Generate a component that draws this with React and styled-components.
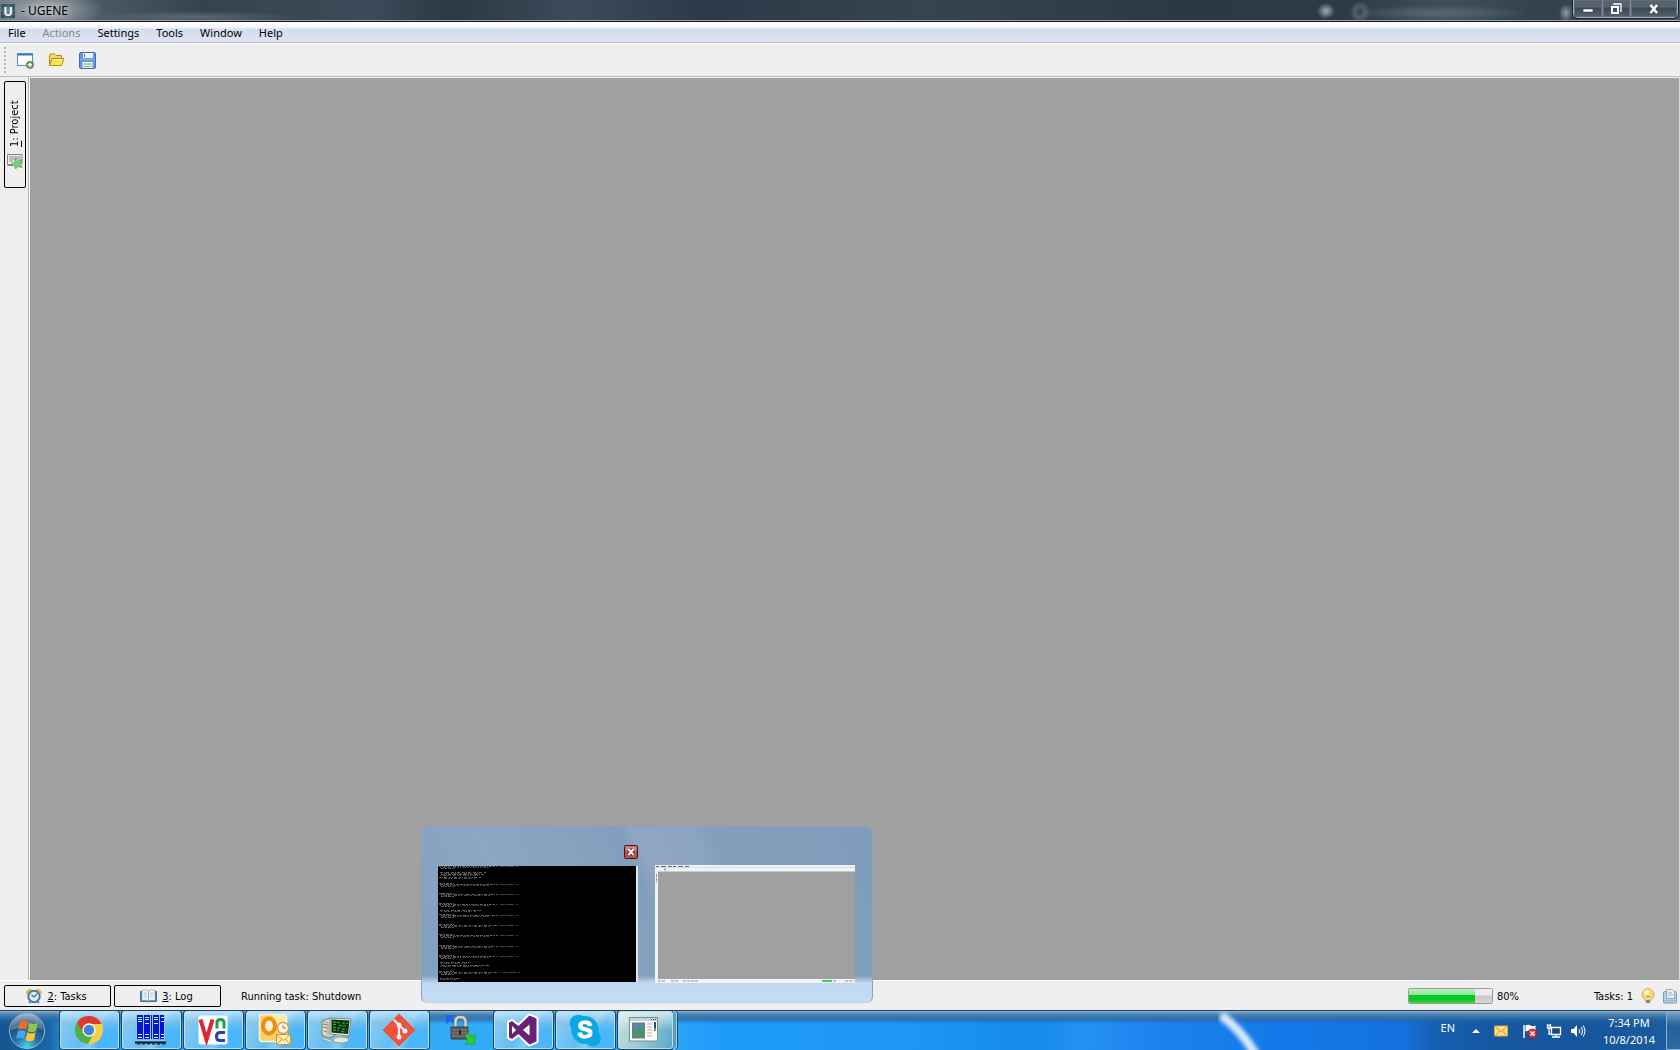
import React from "react";
import styled, { createGlobalStyle, css } from "styled-components";

const GlobalStyle = createGlobalStyle`
  *, *::before, *::after { box-sizing: border-box; }
  html, body, #root { height: 100%; }
  body { margin: 0; overflow: hidden; background: #efefef; }
  button { font: inherit; color: inherit; background: none; border: 0; padding: 0; margin: 0; }
  svg { display: block; flex: none; }
`;

const uiFont = `"Noto Sans", "Open Sans", sans-serif`;
const tahoma = `"DejaVu Sans Condensed", "Noto Sans", sans-serif`;

const Desktop = styled.div`
  position: relative;
  display: flex;
  flex-direction: column;
  height: 100vh;
  font-family: ${uiFont};
  font-size: 11px;
  color: #000;
`;

/* ---------- title bar ---------- */
const TitleBar = styled.header`
  flex: none;
  display: flex;
  align-items: flex-start;
  height: 22px;
  overflow: hidden;
  border-bottom: 1px solid #10131c;
  box-shadow: inset 0 -1px 0 #9ea5b0;
  background:
    radial-gradient(ellipse 60px 22px at 44px 10px, #a9b0b3 0, #8f989ecc 45%, transparent 100%),
    radial-gradient(ellipse 9px 8px at 1326px 11px, #a5b0b8 0, transparent 100%),
    radial-gradient(ellipse 7px 9px at 1566px 13px, #8f9ba5 0, transparent 100%),
    radial-gradient(ellipse 90px 8px at 1440px 13px, #5b6874 0, transparent 100%),
    radial-gradient(ellipse 110px 6px at 190px 17px, #5c6976 0, transparent 100%),
    linear-gradient(90deg, #68747f 0, #4a5866 6%, #36434f 12%, #3c4a59 22%, #2b3845 27%, #3c4a59 34%, #2d3948 42%, #364350 55%, #2c3846 70%, #2d3947 80%, #3e4f5b 86%, #33404e 92%, #4b5966 100%);
`;
const AppTitle = styled.h1`
  flex: 1;
  display: flex;
  align-items: center;
  gap: 6px;
  height: 21px;
  margin: 0;
  padding-left: 1px;
  font-size: 12px;
  line-height: 20px;
  font-weight: 400;
  text-shadow: 0 0 6px #d5dadc, 0 0 8px #c2c8cb;
`;
const GhostRing = styled.svg`
  margin-right: 203px;
  filter: blur(2px);
`;
const WindowButtons = styled.div`
  display: flex;
  height: 18px;
  margin-right: 2px;
  border: 1px solid #a2abb3;
  border-top: 0;
  border-radius: 0 0 5px 5px;
  box-shadow: 0 0 0 1px #1d2631;
  background: linear-gradient(#56636f 0 40%, #3d4954 50%, #56616c);
`;
const WindowButton = styled.button`
  display: grid;
  place-items: center;
  width: ${(p) => (p.$wide ? 47 : 28)}px;
  border-left: ${(p) => (p.$first ? "0" : "1px solid #7f8a94")};
  box-shadow: inset 0 0 0 1px #606c77;
`;

/* ---------- menus and tool bar ---------- */
const MenuBar = styled.nav`
  flex: none;
  display: flex;
  gap: 1px;
  height: 21px;
  border-bottom: 1px solid #b6b9cf;
  background: linear-gradient(#ffffff 0, #f4f7fb 25%, #d5dcec 38%, #dfe4f5 100%);
`;
const MenuItem = styled.button`
  padding: 2px 8px 0;
  line-height: 18px;
  color: ${(p) => (p.disabled ? "#868890" : "#000")};
`;
const ToolBar = styled.div`
  flex: none;
  display: flex;
  align-items: center;
  gap: 12px;
  height: 34px;
  padding-left: 4px;
  border-top: 1px solid #fff;
  border-bottom: 1px solid #b9bdba;
  background: #efefef;
`;
const Grip = styled.span`
  width: 2px;
  height: 26px;
  background: repeating-linear-gradient(#b5b5b5 0 2px, transparent 2px 4px);
`;
const ToolButtons = styled.div`
  display: flex;
  gap: 14px;
  margin-left: -1px;
`;

/* ---------- workspace ---------- */
const Workspace = styled.main`
  flex: 1;
  display: flex;
  min-height: 0;
  background: #a0a0a0;
`;
const Dock = styled.aside`
  width: 30px;
  padding: 4px 0 0 4px;
  background: #efefef;
  border-right: 1px solid #fafafa;
  box-shadow: inset -1px 0 0 #b4b4b4;
`;
const Canvas = styled.section`
  flex: 1;
  background: #a0a0a0;
  border-top: 1px solid #f2f2f2;
  border-right: 1px solid #d8d8d8;
`;
const outlined = css`
  display: flex;
  align-items: center;
  border: 1px solid #000;
  border-radius: 2px;
  background: #efefef;
  font-family: ${tahoma};
  font-size: 11px;
`;
const DockTab = styled.button`
  ${outlined}
  writing-mode: vertical-rl;
  transform: rotate(180deg);
  justify-content: center;
  gap: 6px;
  width: 22px;
  height: 107px;
  line-height: 18px;
`;
const UprightIcon = styled.span`
  transform: rotate(180deg);
`;

/* ---------- status bar ---------- */
const StatusBar = styled.footer`
  flex: none;
  display: flex;
  align-items: center;
  gap: 3px;
  height: 30px;
  padding: 1px 2px 0 4px;
  border-top: 1px solid #fff;
  background: #efefef;
  font-family: ${tahoma};
  font-size: 11px;
`;
const StatusTab = styled.button`
  ${outlined}
  justify-content: center;
  gap: 5px;
  width: 107px;
  height: 22px;
  padding-right: 2px;
`;
const Running = styled.span`
  flex: 1;
  padding-left: 17px;
`;
const Progress = styled.progress`
  appearance: none;
  width: 85px;
  height: 16px;
  border: 1px solid #9a9a9a;
  border-radius: 2px;
  overflow: hidden;
  &::-webkit-progress-bar {
    background: linear-gradient(#ececec 0 40%, #cacaca 50%, #d6d6d6);
  }
  &::-webkit-progress-value {
    background: linear-gradient(#b9f3bd 0, #8fe79a 40%, #08cb1f 46%, #0ac522 75%, #3bdc4a 100%);
  }
`;
const ProgressLabel = styled.label`
  display: flex;
  align-items: center;
  gap: 4px;
  margin-right: 72px;
`;
const TaskCount = styled.span`
  margin-right: 5px;
`;
const StatusIcons = styled.div`
  display: flex;
  gap: 8px;
`;

/* ---------- task bar ---------- */
const TaskBar = styled.footer`
  flex: none;
  display: flex;
  height: 40px;
  overflow: hidden;
  border-top: 1px solid #1e3c5c;
  background:
    linear-gradient(#a9c4da 0, #6f9dc1 1px, #3d78ab 5px, #2766a4aa 9px, transparent 13px),
    linear-gradient(90deg, #14548f 0, #1a67a6 50px, #2c9fe8 70px, #35aef5 320px, #2fa8f6 660px, #1f9bfa 720px, #1c97f8 900px, #1689ec 1040px, #2490f6 1080px, #1a80ea 1180px, #1379e8 1280px, #1471df 1405px, #155fb0 1435px, #1556a0 1500px, #16569b 1600px, #1c5d9f 100%);
`;
const StartButton = styled.button`
  width: 60px;
  padding-left: 8px;
`;
const AppButtons = styled.div`
  display: flex;
  gap: 3px;
`;
const AppButton = styled.button`
  display: grid;
  place-items: center;
  width: 59px;
  height: 38px;
  padding-right: 2px;
  border-radius: 3px;
  ${(p) =>
    !p.$plain &&
    css`
      border: 1px solid #b9dff5;
      box-shadow: 0 0 0 1px #17476f;
      background:
        linear-gradient(#e6f4fb99 0, #8cc3e288 30%, transparent 50%),
        linear-gradient(115deg, #8ccef2 0, #62bdf3 45%, #84cdf8 60%, #4cb8fa 70%, #45b5fb 100%);
    `}
  ${(p) =>
    p.$active &&
    css`
      width: 55px;
      padding-right: 4px;
      background:
        linear-gradient(#ecf7f6bb 0, #b5dbe000 50%),
        linear-gradient(110deg, #c6e3de 0, #8dc3cd 60%, #57a8ce 100%);
    `}
`;
const StackEdge = styled.span`
  width: 4px;
  height: 38px;
  margin-left: -3px;
  border: 1px solid #a9d3e5;
  border-left: 0;
  border-radius: 0 3px 3px 0;
  background: #5b9bbd;
  box-shadow: 1px 0 0 #17476f;
`;
const Sweep = styled.div`
  flex: 1;
  display: flex;
  justify-content: flex-end;
  padding-right: 173px;
`;
const SweepArc = styled.path`
  fill: none;
  stroke: #d8eafb;
  stroke-width: 9px;
  filter: blur(2px);
`;
const Tray = styled.div`
  display: flex;
  align-items: center;
  color: #fff;
`;
const Language = styled.button`
  margin-right: 17px;
  padding-bottom: 6px;
`;
const TrayIcons = styled.div`
  display: flex;
  align-items: center;
  gap: 8px;
`;
const TrayButton = styled.button`
  margin-right: ${(p) => p.$space || 0}px;
`;
const Clock = styled.time`
  width: 80px;
  padding-left: 6px;
  text-align: center;
  line-height: 17px;
`;
const ShowDesktop = styled.button`
  width: 14px;
  border: 1px solid #8fb0cf;
  border-right: 0;
  background: linear-gradient(#86a9c8aa, #2d639b88 40%, #3f76ab88);
`;

/* ---------- window previews ---------- */
const Preview = styled.div`
  position: absolute;
  left: 421px;
  bottom: 47px;
  display: flex;
  align-items: flex-start;
  gap: 17px;
  padding: 38px 17px 19px 16px;
  border-radius: 6px;
  border: 1px solid #86a5c4;
  border-bottom-color: #b8d3ec;
  background:
    linear-gradient(transparent 85%, #bfd7f0 89%, #c5dcf5 100%),
    linear-gradient(65deg, #809fbf 0, #8da6c2 25%, #87a3bf 38%, #819fbd 52%, #90a7c2 55%, #8ba4c0 66%, #829fbc 69%, #7f9dba 100%);
`;
const ThumbButton = styled.button`
  display: block;
`;
const ClosePreview = styled.button`
  position: absolute;
  left: 202px;
  top: 18px;
`;

/* ---------- drawings ---------- */
const Svg = ({ w, h, children }) => (
  <svg width={w} height={h} viewBox={`0 0 ${w} ${h}`} aria-hidden="true">{children}</svg>
);

const UgeneIcon = () => (
  <Svg w={14} h={14}>
    <rect width="14" height="14" rx="1" fill="#123e47" />
    <rect width="14" height="7" rx="1" fill="#1f4a55" />
    <text x="7" y="11.5" textAnchor="middle" fontFamily="Liberation Sans, sans-serif" fontWeight="700" fontSize="12" fill="#fff">U</text>
  </Svg>
);

const NewProjectIcon = () => (
  <Svg w={17} h={17}>
    <rect x=".5" y="1.5" width="15" height="12" fill="#fdfeff" stroke="#4f8bd0" />
    <path d="M1 2h14v2H1z" fill="#8fbdec" />
    <path d="M0 2.5h16" stroke="#3a78c4" />
    <circle cx="13" cy="12.8" r="3.6" fill="#6f9f5a" stroke="#4b7f3d" strokeWidth=".8" />
    <path d="M13 10.8v4M11 12.8h4" stroke="#fff" strokeWidth="1.5" />
  </Svg>
);
const OpenIcon = () => (
  <Svg w={17} h={17}>
    <path d="M1.5 13.5v-10l1-1.500h4l1.500 1.500h5.500v3" fill="#f2d469" stroke="#b58a12" />
    <path d="M1.500 13.500 4 6.500h12l-2.500 7z" fill="#fbe254" stroke="#b98d10" strokeLinejoin="round" />
    <path d="M4.700 7.500h9.800" stroke="#fff7b8" />
  </Svg>
);
const SaveIcon = () => (
  <Svg w={17} h={17}>
    <rect x=".5" y=".5" width="16" height="16" rx="1.500" fill="#6795de" stroke="#3d6cc0" />
    <path d="M4 1h10v5H4z" fill="#eef3fc" />
    <path d="M5.500 2v3" stroke="#4673c4" />
    <path d="M3.500 10h10v6h-10z" fill="#f7fbf5" />
    <path d="M4.500 12h8M4.500 14.500h8" stroke="#8cc58b" strokeWidth="1.300" />
    <path d="M1.500 7.500h14" stroke="#8fb4ee" />
  </Svg>
);
const ProjectIcon = () => (
  <Svg w={16} h={16}>
    <path d="M.5 1.500h14.500v9H10M6 12.500H.5z" fill="#e7ebe7" stroke="#7e8a80" />
    <path d="M.5 1.500v10H6" fill="none" stroke="#7e8a80" />
    <path d="M3 3v6M5 3v7M7 3v4M9 3v4M11 3v4M13 3v5" stroke="#88918a" />
    <path d="M9 5v3.500L15 7l-1.500 4 1.500 3.500-4-1-2.500 2.500-1-3L4 11.500l3.500-2z" fill="#76cf7e" stroke="#4eaa5c" strokeWidth=".8" />
  </Svg>
);
const AlarmIcon = () => (
  <Svg w={16} h={16}>
    <path d="M1.500 4.500 4 2M14.500 4.500 12 2" stroke="#e8b93c" strokeWidth="3" strokeLinecap="round" />
    <path d="m3 15 2-2M13 15l-2-2" stroke="#456a8a" strokeWidth="1.500" />
    <circle cx="8" cy="8.500" r="5.700" fill="#dcebf7" stroke="#4b7aa6" strokeWidth="2" />
    <path d="m5.500 7 2.500 2 3-3" stroke="#41688e" fill="none" strokeWidth="1.200" />
  </Svg>
);
const BookIcon = () => (
  <Svg w={17} h={16}>
    <path d="M.5 3.500h16v10h-7l-1 1-1-1h-7z" fill="#4f81a6" stroke="#41708f" />
    <path d="M2 2.500q4-1.500 6.500 0.500v10q-3-1.500-6.500-.5zM15 2.500q-4-1.500-6.500.500v10q3-1.500 6.500-.5z" fill="#f8fbfd" stroke="#7c9db3" strokeWidth=".7" />
    <path d="M3.500 5h3.500M3.500 7h3.500M3.500 9h3.500M10 5h3.500M10 7h3.500M10 9h3.500" stroke="#9fb8c9" strokeWidth=".8" />
  </Svg>
);
const BulbIcon = () => (
  <Svg w={14} h={16}>
    <path d="M7 .7a6 6 0 0 0-3.200 11l.8 1h4.800l.8-1A6 6 0 0 0 7 .7z" fill="#fbd875" stroke="#d9a94a" strokeWidth=".9" />
    <circle cx="5.500" cy="4.500" r="2.500" fill="#fff6d5" />
    <path d="m5 8 1 1 1-1 1 1 1-1" stroke="#c88c2c" fill="none" />
    <path d="M5 12h4v3H5z" fill="#7c8797" />
  </Svg>
);
const ClipboardIcon = () => (
  <Svg w={15} h={16}>
    <rect x=".5" y="3.500" width="13" height="11.500" rx="1" fill="#b9cfe2" stroke="#7e99b3" />
    <path d="M3.500 10.500v-9h6l2 2v7z" fill="#e7eff6" stroke="#91a8bd" />
    <path d="M5 5h4M5 7h5M2 12.500h10" stroke="#9db4c7" />
  </Svg>
);

const StartOrb = () => (
  <Svg w={38} h={38}>
    <defs>
      <radialGradient id="orb" cx=".5" cy=".95" r=".95">
        <stop offset="0" stopColor="#4ed3f1" />
        <stop offset=".35" stopColor="#2277a5" />
        <stop offset=".75" stopColor="#1c4a76" />
        <stop offset="1" stopColor="#8fa9bf" />
      </radialGradient>
    </defs>
    <circle cx="19" cy="19" r="17.500" fill="url(#orb)" stroke="#9cb9ce" />
    <path d="M3 18a16 16 0 0 1 32 0q-14-7-32 0z" fill="#fff" opacity=".25" />
    <path d="M12 10q4.500-2.500 8 0L18.200 18q-4.500-2.500-8.200 0z" fill="#ee6b2e" />
    <path d="M21.300 10.800q4 2.500 8.500 0L28 19q-4.500 2.500-8.500 0z" fill="#91c740" />
    <path d="M9.700 19.500q4.500-2.500 8.200 0L16.200 27q-4.500-2.500-8 0z" fill="#4ba6e6" />
    <path d="M19.200 20.300q4 2.500 8.500 0L26 28q-4.500 2.500-8.500 0z" fill="#fbc739" />
  </Svg>
);
const ChromeIcon = () => (
  <Svg w={30} h={30}>
    <circle cx="15" cy="15" r="14" fill="#f7d046" />
    <path d="M15 15 3 7.500A14 14 0 0 0 14 29l5.500-10z" fill="#4db04c" />
    <path d="M3 7.500 9.500 18 15 9h12.500A14 14 0 0 0 3 7.500z" fill="#de3a30" />
    <circle cx="15" cy="15" r="6.700" fill="#f2f4f6" />
    <circle cx="15" cy="15" r="5.200" fill="#4286d6" />
  </Svg>
);
const ServerIcon = () => (
  <Svg w={32} h={32}>
    <path d="M1 1h29v24H1z" fill="#0812cf" />
    <path d="M1.500 25V1M8.500 25V1M15.500 25V1M17.500 25V1M24.500 25V1M29.500 25V1" stroke="#79d2f5" />
    <path d="M3 3.500h4M3 5.500h4M3 7.500h4M10 3.500h4M10 5.500h4M19 3.500h4M19 5.500h4M26 3.500h3M26 7.500h3M3 20.500h4M3 23.500h4M10 20.500h4M10 23.500h4M19 20.500h4M19 23.500h4M26 20.500h3M26 23.500h3M10 9.500h4M19 9.500h4" stroke="#c7f1fa" />
    <path d="M1 26.500h29" stroke="#79d2f5" />
    <path d="M0 28.500h31" stroke="#06151b" strokeWidth="2" />
    <path d="M2 30h28" stroke="#06151b" strokeDasharray="3 2" />
  </Svg>
);
const VncIcon = () => (
  <Svg w={30} h={30}>
    <rect x=".5" y=".5" width="29" height="29" rx="2" fill="#fdfdfd" />
    <path d="m2.500 4.500 6 20 6-20" stroke="#df2631" strokeWidth="4" fill="none" />
    <path d="M19 13.500V8q0-3.500 3.500-3.500T26 8v5.500" stroke="#1aa045" strokeWidth="3" fill="none" />
    <path d="M27 17.500h-5q-3.500 0-3.500 4t3.500 4h5" stroke="#2a3fbe" strokeWidth="3" fill="none" />
  </Svg>
);
const OutlookIcon = () => (
  <Svg w={34} h={34}>
    <rect x="1.500" y="1.500" width="27" height="27" rx="3" fill="#fbd06c" stroke="#fff3ce" strokeWidth="1.500" />
    <path d="M15 2h13v13H15z" fill="#fde8ae" />
    <ellipse cx="11" cy="13" rx="6" ry="7.500" fill="#fff3d2" stroke="#e98d13" strokeWidth="4" />
    <circle cx="25" cy="15" r="5.500" fill="#fffaf0" stroke="#dc9b42" strokeWidth="1.400" />
    <path d="M25 12v3h3" fill="none" stroke="#a96b26" />
    <path d="M18.500 21.500h14v10h-14z" fill="#fff2bf" stroke="#d79226" />
    <path d="m19 22 6.500 5.500L32 22M19 31l5-5M32 31l-5-5" fill="none" stroke="#d79226" />
  </Svg>
);
const PuttyIcon = () => (
  <Svg w={32} h={32}>
    <path d="m1 7 8-3 4 1v17l-6 2-6-3z" fill="#d9d6cb" stroke="#6d6b63" strokeWidth=".8" />
    <path d="M2 10l5 1M2 13l5 1M3 17l3 1" stroke="#807d72" />
    <path d="m1 7 6 2v15" fill="none" stroke="#a5a297" />
    <path d="m9 4 21 1-2 17-19-2z" fill="#e9e6dc" stroke="#77766c" strokeWidth=".8" />
    <path d="m10.500 5.500 18 1-1.500 13.500-16.500-1.500z" fill="#06300e" />
    <path d="M12 8l7 .5M21 9l6 .3M12 10.500l4 .3M18 11.500l8 .5M12 13.500l7 .5M21 15l5 .4M12 16l6 .6M20 17.500l5 .4" stroke="#2da338" strokeWidth="1.300" strokeDasharray="3 1" />
    <path d="M16 21l7 1v3h-7z" fill="#bbb8ac" />
    <ellipse cx="20" cy="26" rx="8" ry="3" fill="#e9e6dc" stroke="#87867c" strokeWidth=".7" />
    <path d="m2 23 10 4-2 2-9-4z" fill="#d9d5c8" stroke="#8c897e" strokeWidth=".6" />
  </Svg>
);
const GitIcon = () => (
  <Svg w={34} h={34}>
    <path d="M17 1 33 17 17 33 1 17z" fill="#f0523a" stroke="#f0523a" strokeLinejoin="round" />
    <path d="M11.500 6.500 17 12v12M17 12l6 6" stroke="#dff0fa" strokeWidth="2.200" fill="none" />
    <circle cx="17" cy="12" r="2.500" fill="#dff0fa" />
    <circle cx="17" cy="24" r="2.500" fill="#dff0fa" />
    <circle cx="23" cy="18" r="2.500" fill="#dff0fa" />
  </Svg>
);
const LockIcon = () => (
  <Svg w={32} h={32}>
    <path d="M1 1h9L7 4l3 4-2 2-3-3-4 3z" fill="#1368e4" />
    <path d="M10.500 15V8q0-5 5-5t5 5v7" fill="none" stroke="#6d7173" strokeWidth="4" />
    <path d="M10.500 15V8q0-5 5-5t5 5v7" fill="none" stroke="#d0d3d4" strokeWidth="2.500" />
    <rect x="6" y="13" width="17" height="12" rx="1" fill="#5c5a58" stroke="#393a3b" />
    <path d="M6 16h17M6 19h17M6 22h17" stroke="#827f7b" />
    <path d="M14 16h2v5h-2z" fill="#252525" />
    <path d="m20 21 3-2 4 4 3-3v10H20l3-3z" fill="#29cf2d" stroke="#159c20" strokeWidth=".6" />
  </Svg>
);
const VisualStudioIcon = () => (
  <Svg w={34} h={34}>
    <path fillRule="evenodd" d="m23.500 2.500 7 3v23l-7 3-11-10.500-6.500 5-3-1.500v-15l3-1.500 6.500 5zm0 9L17 17l6.500 5.500zM6 13v8l4-4z" fill="#68217a" stroke="#fff" strokeWidth="4" strokeLinejoin="round" />
    <path fillRule="evenodd" d="m23.500 2.500 7 3v23l-7 3-11-10.500-6.500 5-3-1.500v-15l3-1.500 6.500 5zm0 9L17 17l6.500 5.500zM6 13v8l4-4z" fill="#68217a" />
  </Svg>
);
const SkypeIcon = () => (
  <Svg w={32} h={32}>
    <path d="M9 1a8 8 0 0 1 5 1 14 14 0 0 1 15.500 16.500A8 8 0 0 1 18 30 14 14 0 0 1 2.500 14 8 8 0 0 1 9 1z" fill="#0ba8e3" />
    <text x="16" y="24" textAnchor="middle" fontFamily="Liberation Sans, sans-serif" fontWeight="700" fontSize="23" fill="#fff" stroke="#fff">S</text>
  </Svg>
);
const PaneIcon = () => (
  <Svg w={30} h={26}>
    <rect x=".5" y=".5" width="28" height="23.500" fill="#fbfcfd" stroke="#7d8b95" />
    <path d="M1 2.500h27" stroke="#c2d4e2" strokeWidth="3" />
    <path d="M22 2.500h1M24 2.500h1M26 2.500h1" stroke="#334a5c" />
    <rect x="3.500" y="6" width="12" height="15" fill="#5c88a8" stroke="#687a86" />
    <path d="M4 16q5-5 11-6v10.500H4z" fill="#4e9364" />
    <path d="M18 7h5M18 10h5M18 13h5M18 16h5M18 19h5" stroke="#d29fa0" />
    <path d="M26 5v9" stroke="#285080" strokeWidth="2" />
    <path d="M26 11v3" stroke="#63a453" strokeWidth="2" />
  </Svg>
);

const ChevronIcon = () => (
  <Svg w={8} h={5}>
    <path d="m0 5 4-4 4 4z" fill="#fff" />
  </Svg>
);
const MailIcon = () => (
  <Svg w={14} h={12}>
    <path d="M.5 1h13v10H.5z" fill="#fae08a" stroke="#e7a93a" />
    <path d="m1 1.500 6 5 6-5M1 11l4.500-5M13 11 8.500 6" stroke="#d8932a" fill="none" />
  </Svg>
);
const FlagIcon = () => (
  <Svg w={16} h={16}>
    <path d="M2 2v13" stroke="#fff" strokeWidth="1.500" />
    <path d="M3.500 2.500q3-1.500 5 0t5 0v6q-3 1.500-5 0t-5 0z" fill="#fff" />
    <circle cx="10.500" cy="10.500" r="4.500" fill="#db3535" stroke="#8d1a20" strokeWidth=".7" />
    <path d="m8.500 8.500 4 4M12.500 8.500l-4 4" stroke="#fff" strokeWidth="1.500" />
  </Svg>
);
const NetworkIcon = () => (
  <Svg w={16} h={16}>
    <path d="M5.500 4.500h9v7h-9z" fill="#174a80" stroke="#fff" strokeWidth="1.300" />
    <path d="M6 14h8M10 12v2M1.500 1v4h3V1M3 5v6h2M1 2.500h4" stroke="#fff" strokeWidth="1.300" fill="none" />
  </Svg>
);
const VolumeIcon = () => (
  <Svg w={16} h={16}>
    <path d="M1 6h2.500L7 2v12l-3.500-4H1z" fill="#fff" />
    <path d="M9 6q1.500 2 0 4M11 4q3 4 0 8M13 2.500q4 5.500 0 11" stroke="#e7f1fa" fill="none" strokeWidth="1.100" />
  </Svg>
);

const consoleRows = [
  [1, 80, 1], [7, 64, 0], [9, 62, 0], [12, 58, 0], [19, 80, 1], [29, 80, 1], [39, 80, 1], [45, 58, 0],
  [50, 80, 1], [60, 80, 1], [70, 80, 1], [81, 80, 1], [91, 80, 1], [97, 46, 0], [100, 68, 0], [107, 82, 1], [113, 30, 0],
];
const ConsoleThumb = () => (
  <Svg w={200} h={117}>
    <path d="M0 1h198v116H0z" fill="#000" />
    <path d="M199 1v116" stroke="#dfe6ee" strokeWidth="2" />
    {consoleRows.map(([y, len, bold], i) => (
      <g key={y} stroke="#b9b9b9" fill="none">
        <path d={`M${(i % 3) + 1} ${y + 0.5}H${len * 0.75}`} strokeDasharray={`${2 + (i % 3)} 1 1 1 3 ${1 + (i % 2)}`} opacity=".5" />
        <path d={`M${(i % 2) + 2} ${y + 1.5}H${len * 0.65}`} strokeDasharray="1 2 3 1 2 1" opacity=".4" />
        {bold === 1 && (
          <>
            <path d={`M1 ${y - 0.5}h15M3 ${y + 2.5}h13`} strokeDasharray="3 1 2 1" opacity=".5" />
            <path d={`M${len - 18} ${y + 0.5}h18`} strokeDasharray="5 1 8 2" opacity=".35" />
          </>
        )}
      </g>
    ))}
  </Svg>
);
const UgeneThumb = () => (
  <Svg w={200} h={118}>
    <path d="M0 0h200v118H0z" fill="#f3f4f5" />
    <path d="M0 2.500h200" stroke="#d9e5f4" strokeWidth="2" />
    <path d="M1 1.500h34" stroke="#57647a" strokeDasharray="3 2 5 2 4 1" />
    <path d="M9 4.500h2" stroke="#9ba6b3" strokeWidth="2" />
    <path d="M3 6.500h197V114H3z" fill="#a0a0a0" />
    <path d="M1.500 9v9" stroke="#8d9692" strokeDasharray="3 1" />
    <path d="M3 116h8M16 116h8M28 116h15M178 116h4M190 116h9" stroke="#8c8f8f" strokeDasharray="3 1" />
    <path d="M167 116h10" stroke="#35cf57" strokeWidth="2" />
  </Svg>
);

const menus = ["File", "Actions", "Settings", "Tools", "Window", "Help"];
const tools = [["New project", NewProjectIcon], ["Open", OpenIcon], ["Save", SaveIcon]];
const apps = [
  ["Google Chrome", ChromeIcon], ["Server manager", ServerIcon], ["VNC Viewer", VncIcon],
  ["Outlook", OutlookIcon], ["PuTTY", PuttyIcon], ["Git", GitIcon], ["WinSCP", LockIcon],
  ["Visual Studio", VisualStudioIcon], ["Skype", SkypeIcon], ["UGENE", PaneIcon],
];
const trayItems = [
  ["Show hidden icons", ChevronIcon, 6], ["Mail", MailIcon, 6], ["Action Center", FlagIcon, 0],
  ["Network", NetworkIcon, 0], ["Volume", VolumeIcon, 0],
];

export default function App() {
  return (
    <Desktop>
      <GlobalStyle />
      <TitleBar>
        <AppTitle><UgeneIcon />- UGENE</AppTitle>
        <GhostRing width="20" height="21" aria-hidden="true">
          <circle cx="10" cy="12" r="6" fill="none" stroke="#84909b" strokeWidth="2" />
        </GhostRing>
        <WindowButtons>
          <WindowButton $first aria-label="Minimize">
            <Svg w={14} h={14}><path d="M2 7h10v3H2z" fill="#fff" stroke="#35414d" strokeWidth=".6" /></Svg>
          </WindowButton>
          <WindowButton aria-label="Restore">
            <Svg w={14} h={14}><path d="M4 3V2h7v7h-1" fill="none" stroke="#fff" strokeWidth="1.300" /><path d="M2 5h6v6H2z" fill="none" stroke="#fff" strokeWidth="2" /></Svg>
          </WindowButton>
          <WindowButton $wide aria-label="Close">
            <Svg w={14} h={14}><path d="m3.500 3 6.500 8M10 3l-6.500 8" fill="none" stroke="#fff" strokeWidth="2.400" /></Svg>
          </WindowButton>
        </WindowButtons>
      </TitleBar>

      <MenuBar>
        {menus.map((m) => <MenuItem key={m} disabled={m === "Actions"}>{m}</MenuItem>)}
      </MenuBar>

      <ToolBar role="toolbar">
        <Grip />
        <ToolButtons>
          {tools.map(([name, Icon]) => <button key={name} aria-label={name}><Icon /></button>)}
        </ToolButtons>
      </ToolBar>

      <Workspace>
        <Dock>
          <DockTab>
            <UprightIcon><ProjectIcon /></UprightIcon>
            <span><u>1</u>: Project</span>
          </DockTab>
        </Dock>
        <Canvas />
      </Workspace>

      <StatusBar>
        <StatusTab><AlarmIcon /><span><u>2</u>: Tasks</span></StatusTab>
        <StatusTab><BookIcon /><span><u>3</u>: Log</span></StatusTab>
        <Running>Running task: Shutdown</Running>
        <ProgressLabel><Progress value={80} max={100} />80%</ProgressLabel>
        <TaskCount>Tasks: 1</TaskCount>
        <StatusIcons>
          <button aria-label="Notifications"><BulbIcon /></button>
          <button aria-label="Clipboard"><ClipboardIcon /></button>
        </StatusIcons>
      </StatusBar>

      <TaskBar>
        <StartButton aria-label="Start"><StartOrb /></StartButton>
        <AppButtons>
          {apps.map(([name, Icon]) => (
            <AppButton key={name} aria-label={name} $plain={name === "WinSCP"} $active={name === "UGENE"}><Icon /></AppButton>
          ))}
          <StackEdge />
        </AppButtons>
        <Sweep>
          <svg width="50" height="39" aria-hidden="true">
            <SweepArc d="M3 4Q24 20 38 44" />
          </svg>
        </Sweep>
        <Tray>
          <Language>EN</Language>
          <TrayIcons>
            {trayItems.map(([name, Icon, space]) => (
              <TrayButton key={name} aria-label={name} $space={space}><Icon /></TrayButton>
            ))}
          </TrayIcons>
          <Clock>7:34 PM<br />10/8/2014</Clock>
        </Tray>
        <ShowDesktop aria-label="Show desktop" />
      </TaskBar>

      <Preview>
        <ThumbButton aria-label="Console window"><ConsoleThumb /></ThumbButton>
        <ThumbButton aria-label="UGENE window"><UgeneThumb /></ThumbButton>
        <ClosePreview aria-label="Close window">
          <Svg w={14} h={14}>
            <rect x=".5" y=".5" width="13" height="13" rx="1" fill="#b6534d" stroke="#4a1519" />
            <path d="M1.500 1.500h11V6h-11z" fill="#d38d85" />
            <path d="m4.500 4 5 6M9.500 4l-5 6" stroke="#5a2023" strokeWidth="3.600" />
            <path d="m4.500 4 5 6M9.500 4l-5 6" stroke="#fff" strokeWidth="2" />
          </Svg>
        </ClosePreview>
      </Preview>
    </Desktop>
  );
}
